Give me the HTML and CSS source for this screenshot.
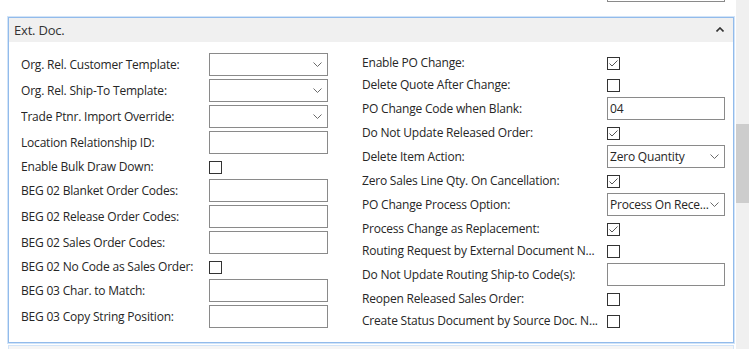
FILE: index.html
```html
<!DOCTYPE html>
<html lang="en">
<head>
    <meta charset="UTF-8">
    <meta name="viewport" content="width=device-width, initial-scale=1.0">
    <title>Ext. Doc.</title>
    <link rel="stylesheet" href="styles.css">
</head>
<body>
<div class="window">
    <div class="content">
        <div class="prev-tail"><div class="prev-input"></div></div>

        <section class="panel">
            <div class="panel-head">
                <span class="panel-title">Ext. Doc.</span>
                <svg class="caret" width="8" height="5" viewBox="0 0 8 5"><path d="M0.5 4.5 L4 1 L7.5 4.5" fill="none" stroke="#333" stroke-width="1.6"/></svg>
            </div>
            <div class="panel-body">
                <div class="col col-left">
                    <div class="row"><span class="label">Org. Rel. Customer Template:</span>
                        <div class="field select"><span class="value"></span><svg class="chev" width="9" height="5" viewBox="0 0 9 5"><path d="M0.5 0.5 L4.5 4.5 L8.5 0.5" fill="none" stroke="#6b6b6b"/></svg></div></div>
                    <div class="row"><span class="label">Org. Rel. Ship-To Template:</span>
                        <div class="field select"><span class="value"></span><svg class="chev" width="9" height="5" viewBox="0 0 9 5"><path d="M0.5 0.5 L4.5 4.5 L8.5 0.5" fill="none" stroke="#6b6b6b"/></svg></div></div>
                    <div class="row"><span class="label">Trade Ptnr. Import Override:</span>
                        <div class="field select"><span class="value"></span><svg class="chev" width="9" height="5" viewBox="0 0 9 5"><path d="M0.5 0.5 L4.5 4.5 L8.5 0.5" fill="none" stroke="#6b6b6b"/></svg></div></div>
                    <div class="row"><span class="label">Location Relationship ID:</span>
                        <div class="field"></div></div>
                    <div class="row check"><span class="label">Enable Bulk Draw Down:</span>
                        <span class="box"></span></div>
                    <div class="row"><span class="label">BEG 02 Blanket Order Codes:</span>
                        <div class="field"></div></div>
                    <div class="row"><span class="label">BEG 02 Release Order Codes:</span>
                        <div class="field"></div></div>
                    <div class="row"><span class="label">BEG 02 Sales Order Codes:</span>
                        <div class="field"></div></div>
                    <div class="row check"><span class="label">BEG 02 No Code as Sales Order:</span>
                        <span class="box"></span></div>
                    <div class="row"><span class="label">BEG 03 Char. to Match:</span>
                        <div class="field"></div></div>
                    <div class="row"><span class="label">BEG 03 Copy String Position:</span>
                        <div class="field"></div></div>
                </div>

                <div class="col col-right">
                    <div class="row check"><span class="label">Enable PO Change:</span>
                        <span class="box"><svg width="11" height="11" viewBox="0 0 11 11"><path d="M1.5 5.5 L4 8 L9.5 2.5" fill="none" stroke="#555"/></svg></span></div>
                    <div class="row check"><span class="label">Delete Quote After Change:</span>
                        <span class="box"></span></div>
                    <div class="row"><span class="label">PO Change Code when Blank:</span>
                        <div class="field"><span class="value">04</span></div></div>
                    <div class="row check"><span class="label">Do Not Update Released Order:</span>
                        <span class="box"><svg width="11" height="11" viewBox="0 0 11 11"><path d="M1.5 5.5 L4 8 L9.5 2.5" fill="none" stroke="#555"/></svg></span></div>
                    <div class="row"><span class="label">Delete Item Action:</span>
                        <div class="field select"><span class="value">Zero Quantity</span><svg class="chev" width="9" height="5" viewBox="0 0 9 5"><path d="M0.5 0.5 L4.5 4.5 L8.5 0.5" fill="none" stroke="#6b6b6b"/></svg></div></div>
                    <div class="row check"><span class="label">Zero Sales Line Qty. On Cancellation:</span>
                        <span class="box"><svg width="11" height="11" viewBox="0 0 11 11"><path d="M1.5 5.5 L4 8 L9.5 2.5" fill="none" stroke="#555"/></svg></span></div>
                    <div class="row"><span class="label">PO Change Process Option:</span>
                        <div class="field select"><span class="value">Process On Rece...</span><svg class="chev" width="9" height="5" viewBox="0 0 9 5"><path d="M0.5 0.5 L4.5 4.5 L8.5 0.5" fill="none" stroke="#6b6b6b"/></svg></div></div>
                    <div class="row check"><span class="label">Process Change as Replacement:</span>
                        <span class="box"><svg width="11" height="11" viewBox="0 0 11 11"><path d="M1.5 5.5 L4 8 L9.5 2.5" fill="none" stroke="#555"/></svg></span></div>
                    <div class="row check"><span class="label">Routing Request by External Document N...</span>
                        <span class="box"></span></div>
                    <div class="row"><span class="label">Do Not Update Routing Ship-to Code(s):</span>
                        <div class="field"></div></div>
                    <div class="row check"><span class="label">Reopen Released Sales Order:</span>
                        <span class="box"></span></div>
                    <div class="row check"><span class="label">Create Status Document by Source Doc. N...</span>
                        <span class="box"></span></div>
                </div>
            </div>
        </section>

        <div class="next-panel"></div>
    </div>
    <div class="scrollbar"><div class="thumb"></div></div>
</div>
</body>
</html>
```

FILE: styles.css
```css
html, body {
    margin: 0;
    height: 100%;
    overflow: hidden;
    background-color: #fff;
}

body {
    font-family: "Open Sans", "Noto Sans", sans-serif;
    font-size: 12px;
    letter-spacing: -0.2px;
    color: #262626;
}

.window {
    display: flex;
    height: 349px;
}

.content {
    width: 736px;
    display: flex;
    flex-direction: column;
}

.prev-tail {
    height: 16px;
    flex-shrink: 0;
}

.prev-input {
    width: 116px;
    height: 1px;
    margin-left: 607px;
    border: 1px solid #8a8a8a;
    border-top: none;
}

.panel {
    flex-shrink: 0;
    width: 724px;
    margin-left: 8px;
    margin-top: 1px;
    border: 1px solid #92bbeb;
    box-shadow: 0 0 0 1px #d2e4f8;
}

.panel-head {
    height: 24px;
    background-color: #f0f0f0;
    display: flex;
    align-items: center;
    justify-content: space-between;
    padding: 0 9px 0 5px;
}

.panel-title {
    font-size: 13px;
    color: #333;
}

.caret {
    margin-top: -1px;
}

.panel-body {
    display: flex;
    padding: 11px 8px 9px 12px;
}

.col {
    display: flex;
    flex-direction: column;
}

.col-left {
    width: 307px;
    margin-right: 34px;
}

.col-right {
    width: 363px;
}

.row {
    display: flex;
    align-items: center;
    height: 23px;
    margin-bottom: 3px;
}

.row.check {
    height: 19px;
}

.label {
    flex-shrink: 0;
    white-space: nowrap;
    overflow: hidden;
}

.col-left .label {
    width: 188px;
}

.col-right .label {
    width: 245px;
}

.field {
    box-sizing: border-box;
    height: 23px;
    border: 1px solid #8a8a8a;
    display: flex;
    align-items: center;
    padding: 0 5px 0 2px;
}

.col-left .field {
    width: 119px;
}

.col-right .field {
    width: 118px;
}

.value {
    flex-grow: 1;
    white-space: nowrap;
}

.box {
    box-sizing: border-box;
    width: 13px;
    height: 13px;
    margin-top: 2px;
    border: 1px solid #333;
    display: flex;
    align-items: center;
    justify-content: center;
}

.next-panel {
    flex-grow: 1;
    margin: 2px 0 0 8px;
    width: 724px;
    border: 1px solid #d2e4f8;
    border-bottom: none;
    background-color: #f5f5f5;
}

.scrollbar {
    width: 13px;
    background-color: #f0f0f0;
}

.thumb {
    margin-top: 124px;
    height: 79px;
    background-color: #cdcdcd;
}
```
